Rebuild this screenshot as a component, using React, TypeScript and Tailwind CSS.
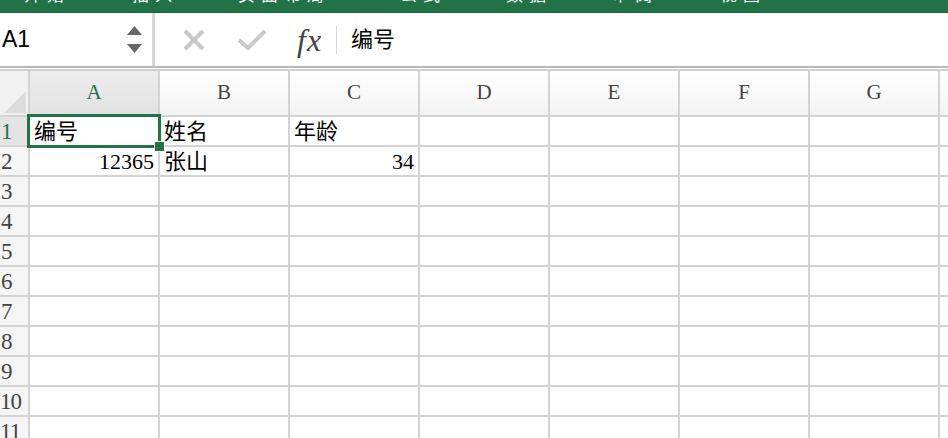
import React from 'react';

const COLS = ['A', 'B', 'C', 'D', 'E', 'F', 'G', 'H'];
const ROWS = [1, 2, 3, 4, 5, 6, 7, 8, 9, 10, 11];
const TABS = [
  { label: '开始', x: 24 },
  { label: '插入', x: 132 },
  { label: '页面布局', x: 238 },
  { label: '公式', x: 400 },
  { label: '数据', x: 506 },
  { label: '审阅', x: 612 },
  { label: '视图', x: 720 },
];

const cellData: Record<string, { text: string; right?: boolean }> = {
  'A1': { text: '编号' },
  'B1': { text: '姓名' },
  'C1': { text: '年龄' },
  'A2': { text: '12365', right: true },
  'B2': { text: '张山' },
  'C2': { text: '34', right: true },
};

const serif = 'font-["Liberation_Serif","Noto_Sans_CJK_SC",serif]';

export default function App() {
  return (
    <div className="w-[948px] h-[438px] overflow-hidden bg-white font-['Liberation_Sans','Noto_Sans_CJK_SC',sans-serif]">
      {/* ribbon tabs, mostly scrolled out of view */}
      <div className="relative h-[13px] overflow-hidden bg-[#217346] border-b border-[#1c5f3a]">
        {TABS.map((t) => (
          <span
            key={t.label}
            className="absolute top-[-13px] text-[17px] leading-[17px] text-white tracking-[6px]"
            style={{ left: t.x }}
          >
            {t.label}
          </span>
        ))}
      </div>

      {/* formula bar */}
      <div className="flex h-[53px] items-stretch">
        <div className="flex w-[152px] items-center pl-[2px] pr-[10px]">
          <span className="flex-1 text-[23px] text-black">A1</span>
          <div className="flex flex-col items-center gap-[9px]">
            <svg width="15" height="9" viewBox="0 0 15 9">
              <path d="M7.5 0L15 9H0z" fill="#666" />
            </svg>
            <svg width="15" height="9" viewBox="0 0 15 9">
              <path d="M0 0h15L7.5 9z" fill="#666" />
            </svg>
          </div>
        </div>
        <div className="w-[3px] bg-[#d6d6d6]" />
        <div className="flex flex-1 items-center">
          <svg className="ml-[27px]" width="24" height="24" viewBox="0 0 24 24">
            <path d="M3 3L21 21M21 3L3 21" stroke="#c9c9c9" strokeWidth="4" />
          </svg>
          <svg className="ml-[31px]" width="30" height="24" viewBox="0 0 30 24">
            <path d="M2 12L11 20L28 3" stroke="#c9c9c9" strokeWidth="4" fill="none" />
          </svg>
          <span className="ml-[30px] font-['Liberation_Serif',serif] italic text-[32px] leading-none tracking-[1px] text-[#444]">
            fx
          </span>
          <div className="ml-[14px] h-[28px] w-px bg-[#d8d8d8]" />
          <span className="ml-[14px] text-[22px] text-black">编号</span>
        </div>
      </div>
      <div className="h-[2px] bg-[#b8b8b8]" />
      <div className="h-px bg-white" />
      <div className="h-[2px] bg-[#d0d0d0]" />

      {/* sheet grid */}
      <div className="grid grid-cols-[28px_repeat(8,128px)] grid-rows-[44px_repeat(11,28px)] gap-[2px] bg-[#d3d3d3] w-[1060px]">
        <div className="relative bg-[#f2f2f2]">
          <svg className="absolute right-[2px] bottom-[2px]" width="22" height="22" viewBox="0 0 22 22">
            <path d="M22 0V22H0z" fill="#dcdcdc" />
          </svg>
        </div>
        {COLS.map((c) => (
          <div
            key={c}
            className={`flex items-center justify-center text-[21px] ${serif} ${
              c === 'A'
                ? 'bg-gradient-to-b from-[#ececec] to-[#e2e2e2] text-[#217346]'
                : 'bg-gradient-to-b from-[#ffffff] to-[#f3f3f3] text-[#444]'
            }`}
          >
            {c}
          </div>
        ))}
        {ROWS.map((r) => (
          <React.Fragment key={r}>
            <div
              className={`flex items-center text-[23px] leading-none tracking-[-1px] ${serif} ${
                r === 1 ? 'bg-[#e4e4e4] text-[#217346]' : 'bg-[#f5f5f5] text-[#444]'
              } ${r >= 10 ? 'pl-0' : 'pl-[1px]'}`}
            >
              {r}
            </div>
            {COLS.map((c) => {
              const d = cellData[`${c}${r}`];
              const selected = c === 'A' && r === 1;
              return (
                <div
                  key={c}
                  className={`relative flex items-center bg-white px-[4px] text-[22px] text-black ${serif} ${
                    d?.right ? 'justify-end' : ''
                  } ${selected ? 'z-10' : ''}`}
                >
                  {d?.text}
                  {selected && (
                    <>
                      <div className="absolute top-[-3px] left-[-3px] right-[-3px] bottom-[-3px] border-[3px] border-solid border-[#217346]" />
                      <div className="absolute right-[-7px] bottom-[-7px] h-[11px] w-[11px] border border-solid border-white bg-[#217346]" />
                    </>
                  )}
                </div>
              );
            })}
          </React.Fragment>
        ))}
      </div>
    </div>
  );
}
